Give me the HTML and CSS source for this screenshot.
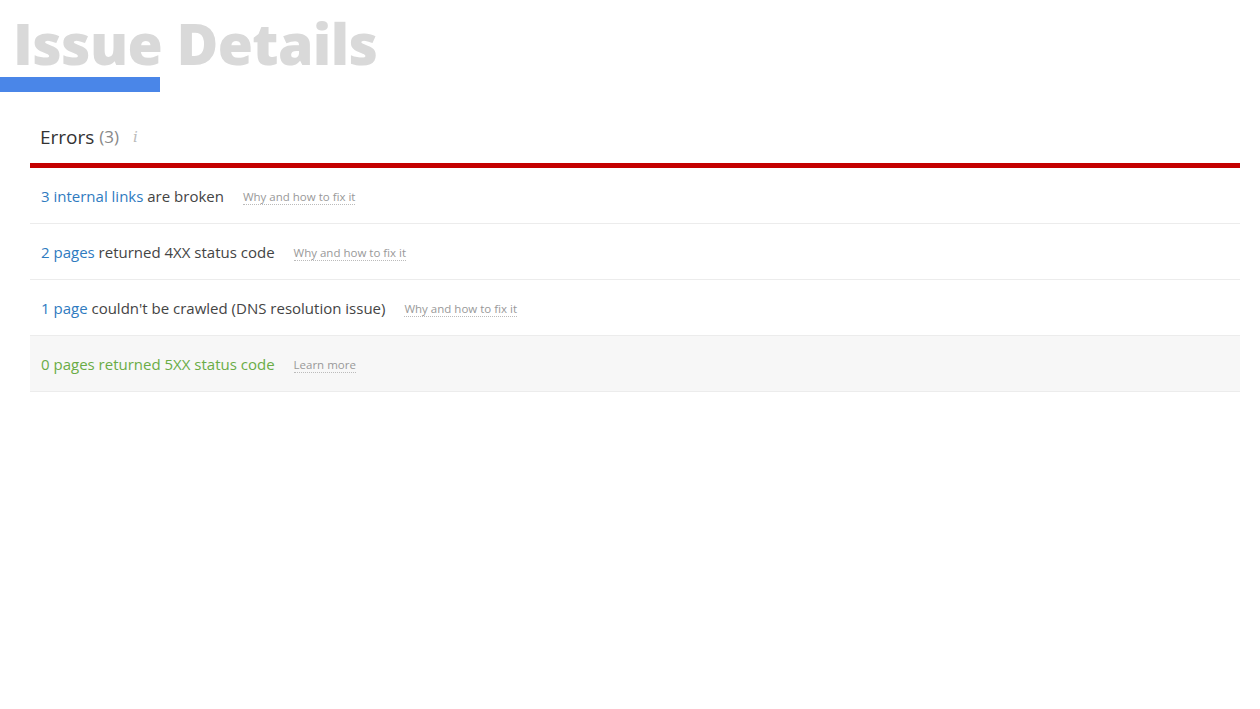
FILE: index.html
```html
<!DOCTYPE html>
<html>
<head>
<meta charset="utf-8">
<link rel="stylesheet" href="styles.css">
</head>
<body>
<header class="page-head">
  <h1 class="title">Issue Details</h1>
  <div class="title-bar"></div>
</header>
<section class="panel">
  <div class="panel-head">
    <span class="panel-title">Errors</span>
    <span class="panel-count">(3)</span>
    <span class="info">i</span>
  </div>
  <ul class="issues">
    <li class="issue"><span class="txt"><a class="num">3 internal links</a> are broken</span><a class="help">Why and how to fix it</a></li>
    <li class="issue"><span class="txt"><a class="num">2 pages</a> returned 4XX status code</span><a class="help">Why and how to fix it</a></li>
    <li class="issue"><span class="txt"><a class="num">1 page</a> couldn't be crawled (DNS resolution issue)</span><a class="help">Why and how to fix it</a></li>
    <li class="issue ok"><span class="txt">0 pages returned 5XX status code</span><a class="help">Learn more</a></li>
  </ul>
</section>
</body>
</html>
```
FILE: styles.css
```css
html, body { margin: 0; padding: 0; background: #fff; }
body { font-family: "Open Sans", "DejaVu Sans", sans-serif; width: 1260px; height: 709px; overflow: hidden; }

.page-head { padding-top: 10px; }
.title {
  margin: 0 0 0 13px;
  font-family: "Open Sans", sans-serif;
  font-weight: 800;
  font-size: 57px;
  line-height: 66px;
  color: #d9d9d9;
  letter-spacing: -0.6px;
}
.title-bar { width: 160px; height: 15px; background: #4a86e8; margin-top: 1px; }

.panel { margin: 28px 20px 0 30px; }
.panel-head {
  padding: 0 0 10px 10px;
  display: flex;
  align-items: center;
  gap: 5px;
  border-bottom: 5px solid #c40000;
  box-sizing: border-box;
  height: 48px;
}
.panel-title { font-size: 19px; color: #333; font-weight: 500; }
.panel-count { font-size: 17px; color: #888; }
.info { font-family: "DejaVu Serif", serif; font-style: italic; color: #bbb; font-size: 15px; margin-left: 9px; }

.issues { list-style: none; margin: 0; padding: 0; }
.issue {
  height: 56px;
  box-sizing: border-box;
  border-bottom: 1px solid #ececec;
  display: flex;
  align-items: center;
  padding-left: 11px;
  gap: 19px;
  font-size: 15px;
  color: #444;
}
.issue.ok { background: #f7f7f7; color: #6aac46; }
.num { color: #2f7bbf; }
.help {
  font-size: 11.5px;
  color: #999;
  border-bottom: 1px dotted #bbb;
  line-height: 14px;
  margin-top: 3px;
}
```
